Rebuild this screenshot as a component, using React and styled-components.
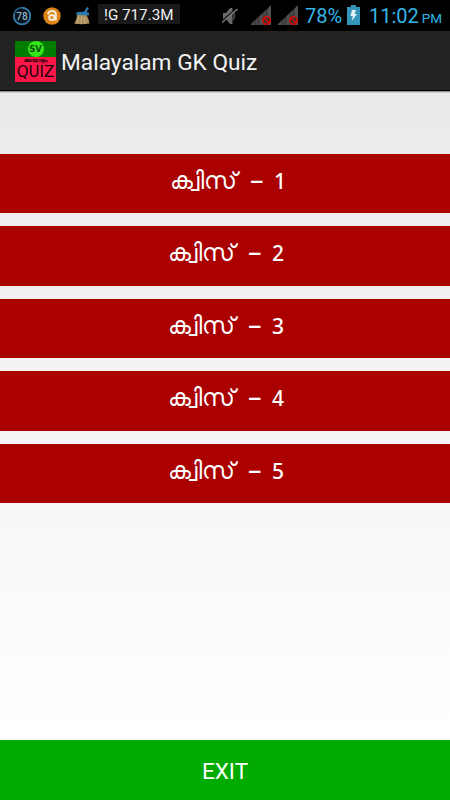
import React from "react";
import styled, { createGlobalStyle } from "styled-components";

const quizzes = [1, 2, 3, 4, 5];

const SignalIcon = () => (
  <svg width="21" height="20" viewBox="0 0 21 20">
    <path d="M0 20V19L4 15V20Z" fill="#505050" />
    <path d="M4 20V15L8 11.5V20Z" fill="#444" />
    <path d="M8 20V11.5L12 7.5V20Z" fill="#505050" />
    <path d="M12 20V7.5L16 4V20Z" fill="#444" />
    <path d="M16 20V4L20 0V20Z" fill="#505050" />
    <path d="M4 15V20M8 11.5V20M12 7.5V20M16 4V20" stroke="#2b2b2b" strokeWidth=".7" />
    <circle cx="15.5" cy="15.5" r="3.7" fill="#333" stroke="#e00505" strokeWidth="1.5" />
    <path d="M13 13L18 18" stroke="#e00505" strokeWidth="1.5" />
  </svg>
);

const BatterySaverIcon = () => (
  <svg width="20" height="20" viewBox="0 0 20 20">
    <circle cx="10" cy="10" r="8.3" fill="#08131d" stroke="#245a80" strokeWidth="1.7" />
    <path d="M10 1.7A8.3 8.3 0 1 1 2 8" fill="none" stroke="#337fb0" strokeWidth="1.5" />
    <text x="10" y="13.6" textAnchor="middle" fontSize="10" fontWeight="500" fill="#91b1c5">
      78
    </text>
  </svg>
);

const AvastIcon = () => (
  <svg width="18" height="18" viewBox="0 0 18 18">
    <circle cx="9" cy="9" r="8.7" fill="#dc8418" />
    <circle cx="8.8" cy="10.5" r="2.6" fill="none" stroke="#f6ead9" strokeWidth="2" />
    <path d="M4.8 7Q6 4 9 4Q12.8 4 12.8 7.8V13.5" fill="none" stroke="#f6ead9" strokeWidth="2.1" />
  </svg>
);

const BroomIcon = () => (
  <svg width="17" height="18" viewBox="0 0 17 18">
    <path d="M3 7Q3 13 0 16.5Q7 18 15.5 16.5Q15 12 12.5 8Z" fill="#ae905e" />
    <path d="M4.5 10L3 16M7.5 10L7 17M10 10L11 17" stroke="#cbb17e" strokeWidth=".8" />
    <path d="M2 6L4 5L10 4.8L13 0L15 1L12.5 5L15 6V8.5L3 8Z" fill="#2c7bac" />
  </svg>
);

const MutedIcon = () => (
  <svg width="16" height="18" viewBox="0 0 16 18">
    <path d="M1 6H4L8 1H10.5V17H8L4 12H1Z" fill="#696969" />
    <path d="M11 5Q14 9 11 13" fill="none" stroke="#515151" strokeWidth="1.5" />
    <path d="M0 14L14 2" stroke="#111" strokeWidth="1.5" />
    <path d="M0 15.5L15.5 2" stroke="#808080" strokeWidth="1.3" />
  </svg>
);

const BatteryIcon = () => (
  <svg width="13" height="20" viewBox="0 0 13 20">
    <path d="M0 2H4V0H9V2H13V20H0Z" fill="#3495b9" />
    <path d="M5 5H9L7.5 9H10L4.8 16L5.8 11H3.5Z" fill="#e4f5f8" />
  </svg>
);

const App = () => (
  <>
    <GlobalStyle />
    <Screen>
      <StatusBar>
        <BatterySaverIcon />
        <Slot $gap="11px">
          <AvastIcon />
        </Slot>
        <Slot $gap="13px">
          <BroomIcon />
        </Slot>
        <Memory>!G 717.3M</Memory>
        <Slot $gap="42px" $top="1px">
          <MutedIcon />
        </Slot>
        <Slot $gap="13px" $top="-1px">
          <SignalIcon />
        </Slot>
        <Slot $gap="6px" $top="-1px">
          <SignalIcon />
        </Slot>
        <Percent>78%</Percent>
        <Slot $gap="5px" $top="-1px">
          <BatteryIcon />
        </Slot>
        <Clock>
          11:02 <small>PM</small>
        </Clock>
      </StatusBar>
      <TitleBar>
        <Logo>
          <LogoTop>
            <span>SV</span>
          </LogoTop>
          <LogoBottom>
            <small>മലയാളം</small>
            <span>QUIZ</span>
          </LogoBottom>
        </Logo>
        <Title>Malayalam GK Quiz</Title>
      </TitleBar>
      <QuizList>
        {quizzes.map((number) => (
          <QuizButton key={number} $first={number === 1}>
            <Word>ക്വിസ്</Word>
            <Dash>–</Dash>
            <Digit>{number}</Digit>
          </QuizButton>
        ))}
      </QuizList>
      <ExitButton>EXIT</ExitButton>
    </Screen>
  </>
);

const GlobalStyle = createGlobalStyle`
  body {
    margin: 0;
    font-family: Roboto, sans-serif;
  }
  * {
    box-sizing: border-box;
  }
  svg {
    display: block;
    flex-shrink: 0;
  }
`;

const Screen = styled.main`
  display: flex;
  flex-direction: column;
  width: 450px;
  height: 800px;
  overflow: hidden;
`;

const StatusBar = styled.header`
  display: flex;
  align-items: center;
  height: 31px;
  padding-left: 12px;
  background: #000;
  white-space: nowrap;
  color: #33b5e5;
`;

const Slot = styled.span`
  margin-left: ${(props) => props.$gap};
  margin-top: ${(props) => props.$top || "0"};
`;

const Memory = styled.span`
  width: 82px;
  height: 20px;
  margin-left: 7px;
  margin-top: -3px;
  padding-left: 6px;
  background: #191919;
  color: #f0f0f0;
  font-size: 15.2px;
  line-height: 22px;
`;

const Percent = styled.span`
  width: 37px;
  margin-left: 6px;
  padding-top: 2px;
  font-size: 20px;
  line-height: 31px;
`;

const Clock = styled.span`
  margin-left: 9px;
  padding-top: 3px;
  font-size: 20px;
  line-height: 31px;
  small {
    margin-left: -2px;
    font-size: 13.5px;
  }
`;

const TitleBar = styled.div`
  display: flex;
  align-items: center;
  height: 60px;
  padding-left: 15px;
  background: #222;
  border-bottom: 1px solid #000;
`;

const Logo = styled.div`
  width: 41px;
  height: 41px;
  margin-top: 1px;
  overflow: hidden;
  color: #180008;
`;

const LogoTop = styled.div`
  display: flex;
  justify-content: center;
  height: 16px;
  background: #007c00;
  span {
    width: 16px;
    height: 16px;
    border-radius: 50%;
    background: #35e51b;
    color: #075008;
    font: bold 8.5px/17px "DejaVu Sans", sans-serif;
    text-align: center;
  }
`;

const LogoBottom = styled.div`
  display: flex;
  flex-direction: column;
  align-items: center;
  height: 25px;
  background: #ff1648;
  small {
    height: 7px;
    font-size: 5.5px;
    font-weight: bold;
    line-height: 7px;
  }
  span {
    font: 15px/17px "DejaVu Sans", sans-serif;
  }
`;

const Title = styled.h1`
  margin: 3px 0 0 5px;
  color: #f3f3f3;
  font-size: 22.7px;
  font-weight: 400;
`;

const QuizList = styled.section`
  display: flex;
  flex-direction: column;
  gap: 13px;
  height: 649px;
  padding-top: 62.6px;
  background:
    linear-gradient(#777, transparent) top / 100% 2px no-repeat,
    linear-gradient(#eaeaea, #fff);
`;

const QuizButton = styled.button`
  display: flex;
  align-items: flex-start;
  flex-shrink: 0;
  width: 100%;
  height: 59.5px;
  padding: 8px 0 0 ${(props) => (props.$first ? "170px" : "168px")};
  border: 0;
  background: #a00;
  color: #fff;
  font: 24px/38px Roboto, sans-serif;
  text-align: left;
`;

const Word = styled.span`
  width: 81px;
  white-space: nowrap;
`;

const Dash = styled.span`
  width: 24px;
  margin-left: -1px;
  font: 27px/34px "Noto Sans", sans-serif;
`;

const Digit = styled.span`
  font: 500 21px/39px "Noto Sans", sans-serif;
`;

const ExitButton = styled.button`
  height: 60px;
  padding: 2px 0 0;
  border: 0;
  background: #0a0;
  color: #fff;
  font: 22.5px Roboto, sans-serif;
`;

export default App;
